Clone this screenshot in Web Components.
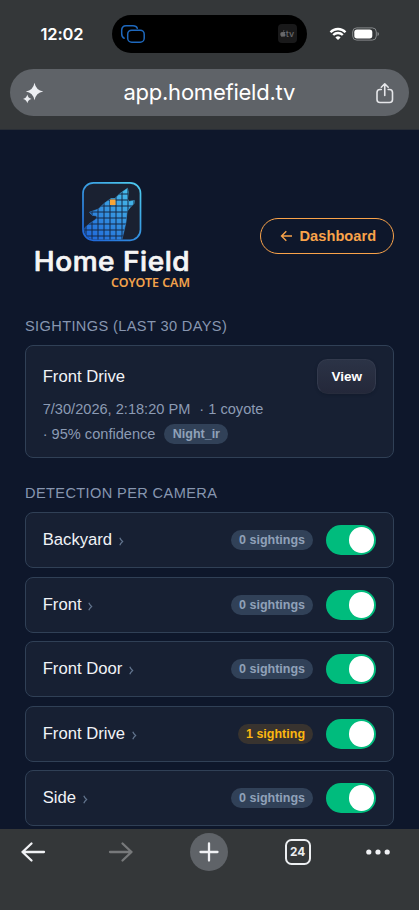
<!DOCTYPE html>
<html lang="en">
<head>
<meta charset="utf-8">
<title>Home Field – Coyote Cam</title>
<style>
html,body{margin:0;height:100%;background:#0e172b;overflow:hidden}
body{font-family:"Liberation Sans",Arial,sans-serif;color:#f1f3f7}
</style>
</head>
<body>
<phone-screen>
  <status-bar slot="top" time="12:02"></status-bar>
  <address-bar slot="top">app.homefield.tv</address-bar>
  <page-header>
    <brand-logo></brand-logo>
    <outline-link>Dashboard</outline-link>
  </page-header>
  <page-section label="Sightings (last 30 days)">
    <sighting-card>
      <span slot="name">Front Drive</span>
      <span slot="time">7/30/2026, 2:18:20 PM</span>
      <span slot="count">· 1 coyote</span>
      <span slot="confidence">· 95% confidence</span>
      <count-badge slot="tag">Night_ir</count-badge>
    </sighting-card>
  </page-section>
  <page-section label="Detection per camera">
    <camera-row name="Backyard"><count-badge>0 sightings</count-badge></camera-row>
    <camera-row name="Front"><count-badge>0 sightings</count-badge></camera-row>
    <camera-row name="Front Door"><count-badge>0 sightings</count-badge></camera-row>
    <camera-row name="Front Drive"><count-badge active>1 sighting</count-badge></camera-row>
    <camera-row name="Side"><count-badge>0 sightings</count-badge></camera-row>
  </page-section>
  <browser-toolbar slot="bottom" tabs="24"></browser-toolbar>
</phone-screen>
<script>
const define=(tag,render)=>customElements.define(tag,class extends HTMLElement{
  constructor(){super();this.attachShadow({mode:"open"});}
  connectedCallback(){this.shadowRoot.innerHTML=render(this);}
});

define("phone-screen",()=>`<style>
:host{display:flex;flex-direction:column;height:910px;width:419px;background:#0e172b;overflow:hidden}
header{flex:none;height:129.500px;background:#343739;border-bottom:1px solid #292e36;box-sizing:border-box}
main{flex:1;min-height:0;overflow:hidden;padding:0 25px}
</style><header><slot name="top"></slot></header><main><slot></slot></main><slot name="bottom"></slot>`);

define("status-bar",el=>`<style>
:host{display:flex;height:52px;padding-top:15px;box-sizing:border-box}
time{width:112px;padding-left:40.500px;box-sizing:border-box;font:600 16.500px/38px Inter,sans-serif;letter-spacing:-.15px;color:#fff}
.island{width:195px;height:37.500px;border-radius:19px;background:#000;display:flex;justify-content:space-between;align-items:center;padding:0 10.500px 0 8px;box-sizing:border-box}
.island>svg{margin-top:1px}
.tv{width:19px;height:19px;border-radius:4px;background:#19191a;color:#68686a;display:flex;align-items:center;justify-content:center;font:500 9px/1 Inter,sans-serif}
.sys{display:flex;align-items:center;gap:5px;padding-left:22px}
</style>
<time>${el.getAttribute("time")}</time>
<div class="island">
<svg width="26" height="22" viewBox="0 0 26 22" fill="none" stroke="#1e68bd" stroke-width="1.500" stroke-linecap="round"><path d="M4.200 15.200C2.300 14.400 1.700 13 1.700 10.700V7.200C1.700 4.300 3.200 2.800 6 2.800h7c2.300 0 3.600.6 4.300 2.400"/><rect x="7.700" y="7.200" width="16.500" height="12" rx="4"/></svg>
<div class="tv"><svg width="6" height="7" viewBox="0 0 6 7" fill="#68686a"><path d="M3 1.800C3 .8 3.600.2 4.300 0c0 1-.5 1.700-1.300 1.800zM3 2.200c.5 0 1.500-.6 2.400.2-.9.7-.8 2 .3 2.400C5.300 6 4.600 7 3.900 6.800c-.6-.3-1-.2-1.500 0C1.500 7.200.3 5.600.3 4.200.3 2.300 1.700 1.700 3 2.200z"/></svg>tv</div>
</div>
<div class="sys">
<svg width="18" height="14" viewBox="0 0 18 14" fill="none" stroke="#fff" stroke-width="2.300"><path d="M1.500 5.300C5.600.9 12.400.9 16.500 5.300M4.200 8C6.900 5.300 11.100 5.300 13.800 8"/><path d="M9 13L6.400 10.400C7.800 9 10.200 9 11.600 10.400z" fill="#fff" stroke="none"/></svg>
<svg width="28" height="14" viewBox="0 0 28 14"><rect x=".7" y=".9" width="23.600" height="12.200" rx="4" fill="none" stroke="#86898b"/><rect x="2.300" y="2.500" width="18" height="9" rx="2.700" fill="#fff"/><path d="M25.500 5v4q1.500-.6 1.500-2t-1.500-2z" fill="#86898b"/></svg>
</div>`);

define("address-bar",()=>`<style>
:host{display:flex;align-items:center;justify-content:space-between;height:47px;margin:17px 10px 0;padding:0 14.500px 0 12px;border-radius:24px;background:#5f6368;box-sizing:border-box}
span{font:400 22px/44px Inter,sans-serif;padding-bottom:2px;letter-spacing:-.23px;color:#fff}
svg{display:block}
</style>
<svg width="22" height="22" viewBox="0 0 22 22" fill="#eceef2"><path d="M12.500.8Q13.900 8.300 21.300 9.500 13.900 10.800 12.500 18.200 11.200 10.800 3.800 9.500 11.200 8.300 12.500.8zM5.300 12.600Q6 16.200 9.500 16.900 6 17.600 5.300 21.200 4.600 17.600 1 16.900 4.600 16.200 5.300 12.600z"/></svg>
<span><slot></slot></span>
<svg width="20" height="22" viewBox="0 0 20 22" fill="none" stroke="#e5e6e9" stroke-width="1.600" stroke-linecap="round" stroke-linejoin="round"><path d="M6.300 7.500H5q-3 0-3 3v7q0 3 3 3h9.500q3 0 3-3v-7q0-3-3-3h-1.300M9.750 13.500V2M6.300 5.200L9.750 1.800l3.450 3.400"/></svg>`);

define("page-header",()=>`<style>
:host{display:flex;justify-content:space-between;height:187.500px;box-sizing:border-box;padding:50.500px 0 0 8px}
::slotted(outline-link){margin-top:37.500px}
</style><slot></slot>`);

const WOLF="M84 228.500L89 224 95.500 219.500 97 217.500 96.500 216 92 215.200 89.500 212.200 98.500 209 104 203.500 111 198.500 115 198.500 120 193.500 127.500 188.300 128.200 192 127.500 199 129 201.500 131 201 134.300 200.500 134 203.500 130.500 207 127 211.500 126 222 124 231 121.500 241H84z";
define("brand-logo",()=>`<style>:host{display:block}svg{display:block}</style>
<svg width="160" height="112" viewBox="33 180 160 112">
<defs><linearGradient id="g" gradientUnits="userSpaceOnUse" x1="90" y1="240" x2="132" y2="186"><stop stop-color="#1f68da"/><stop offset=".5" stop-color="#3593df"/><stop offset="1" stop-color="#4bc5ed"/></linearGradient>
<clipPath id="c"><rect x="84.500" y="184" width="55" height="55.500" rx="9"/></clipPath>
<pattern id="p" x="85.500" y="187.500" width="6" height="6" patternUnits="userSpaceOnUse"><path d="M0 .5H6M.5 0V6" stroke="#142743" stroke-width="1"/></pattern></defs>
<rect x="83" y="182.800" width="57.500" height="57.500" rx="10.500" fill="#1a2131" stroke="url(#g)" stroke-width="1.700"/>
<g clip-path="url(#c)"><path fill="url(#g)" stroke="url(#g)" stroke-width=".6" d="${WOLF}"/><path fill="url(#p)" d="${WOLF}"/>
<rect x="110" y="199.500" width="5.500" height="5.500" fill="#f7a536"/></g>
<text x="33.800" y="270.500" textLength="156.300" lengthAdjust="spacingAndGlyphs" letter-spacing=".5" font-family="Inter,sans-serif" font-weight="500" font-size="26.500" fill="#f5f5f5" stroke="#f5f5f5" stroke-width=".7" stroke-linejoin="round">Home Field</text>
<text x="111" y="286.700" textLength="79" lengthAdjust="spacingAndGlyphs" font-family="Noto Sans,sans-serif" font-weight="600" font-size="12" fill="#f2a24b">COYOTE CAM</text>
</svg>`);

define("outline-link",()=>`<style>
:host{display:flex;align-items:center;box-sizing:border-box;width:134px;height:36px;border:1.500px solid #f9a34a;border-radius:18px;padding-left:18.500px;gap:7px;color:#f9a34a;font-weight:700;font-size:14.600px;letter-spacing:.05px}
</style><svg width="13" height="12" viewBox="0 0 13 12" fill="none" stroke="currentColor" stroke-width="1.400"><path d="M12 6H1.700M6.300 1.200L1.500 6l4.800 4.800"/></svg><slot></slot>`);

define("page-section",el=>`<style>
:host{display:flex;flex-direction:column;gap:8.600px;margin-bottom:26px}
h2{margin:0 0 .7px;font-weight:400;font-size:14.600px;line-height:19px;letter-spacing:.37px;text-transform:uppercase;color:#8796b0}
</style><h2>${el.getAttribute("label")}</h2><slot></slot>`);

define("sighting-card",()=>`<style>
:host{display:flex;flex-direction:column;box-sizing:border-box;height:112.500px;border:1px solid #304056;border-radius:8px;background:#172033;padding:12.500px 16.700px 0}
.head{display:flex;justify-content:space-between;align-items:center;height:35px;font-size:16.670px}
.head slot{display:block;padding-top:1px}
button{width:59.300px;height:35px;padding:0;border:1px solid #333a4d;border-bottom-color:#272c3c;border-radius:10.500px;background:linear-gradient(#2b3346,#24283a);color:#fff;font:700 13.500px/33px "Liberation Sans",Arial,sans-serif;box-shadow:0 1px 3px #0d142466}
.meta{display:flex;align-items:center;height:25px;font-size:14.600px;color:#8c9bb4;gap:9px}
.first{margin-top:2.800px}
</style>
<div class="head"><slot name="name"></slot><button>View</button></div>
<div class="meta first"><slot name="time"></slot><slot name="count"></slot></div>
<div class="meta"><slot name="confidence"></slot><slot name="tag"></slot></div>`);

define("count-badge",()=>`<style>
:host{display:inline-flex;align-items:center;height:20px;box-sizing:border-box;padding:0 8.300px;border-radius:10px;background:#314158;color:#90a1b9;font-weight:700;font-size:12.500px}
:host([active]){background:#38332f;color:#fcb710}
</style><slot></slot>`);

define("toggle-switch",()=>`<style>
:host{display:flex;justify-content:flex-end;align-items:center;width:50.500px;height:30px;border-radius:15px;background:#00bc7d;box-sizing:border-box;padding-right:2px}
i{width:25.500px;height:26px;border-radius:50%;background:#fff}
</style><i></i>`);

define("camera-row",el=>`<style>
:host{display:flex;align-items:center;box-sizing:border-box;height:56px;border:1px solid #304056;border-radius:8px;background:#172033;padding:0 16.700px;font-size:16.670px}
svg{margin:3px 0 0 6.500px}
.end{margin-left:auto;display:flex;align-items:center;gap:12.500px}
</style><span>${el.getAttribute("name")}</span>
<svg width="5" height="9" viewBox="0 0 5 9" fill="none" stroke="#62748e" stroke-width="1.200"><path d="M.8.8Q1.500 2.800 3.600 4.500 1.500 6.200.8 8.200"/></svg>
<div class="end"><slot></slot><toggle-switch></toggle-switch></div>`);

define("browser-toolbar",el=>`<style>
:host{display:grid;grid-template-columns:88.200px 88.200px 88.200px 80.200px 70px;justify-content:start;align-content:start;flex:none;height:81px;box-sizing:border-box;background:#343739;padding:3.500px 0 0 14px}
div{width:38px;height:38px;display:flex;align-items:center;justify-content:center}
.plus{border-radius:50%;background:#5f6368}
b{width:26px;height:26px;border:2px solid #eceef1;border-radius:6.500px;box-sizing:border-box;color:#eceef1;font:700 11.800px/22px Inter,sans-serif;text-align:center}
svg{fill:none;stroke:#f0f1f4;stroke-width:2.300;stroke-linecap:round;stroke-linejoin:round}
</style>
<div><svg width="26" height="22" viewBox="0 0 26 22"><path d="M24 11H2.500M11.500 2.500L2.500 11l9 8.500"/></svg></div>
<div><svg width="26" height="22" viewBox="0 0 26 22" style="stroke:#77797b"><path d="M2 11h21.500M14.500 2.500l9 8.500-9 8.500"/></svg></div>
<div class="plus"><svg width="20" height="20" viewBox="0 0 20 20"><path d="M1.500 10h17M10 1.500v17"/></svg></div>
<div><b>${el.getAttribute("tabs")}</b></div>
<div><svg width="24" height="6" viewBox="0 0 24 6" style="fill:#f0f1f4;stroke:none"><circle cx="2.800" cy="3" r="2.600"/><circle cx="12" cy="3" r="2.600"/><circle cx="21.200" cy="3" r="2.600"/></svg></div>`);
</script>
</body>
</html>
